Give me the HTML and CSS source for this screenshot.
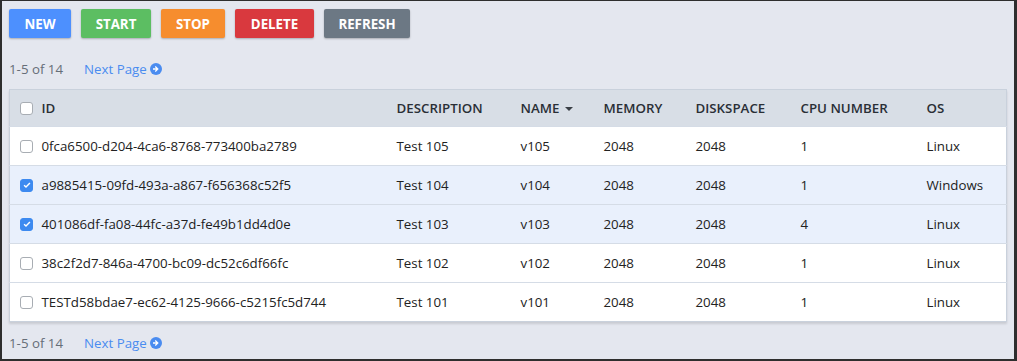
FILE: index.html
```html
<!DOCTYPE html>
<html lang="en">
<head>
  <meta charset="UTF-8">
  <title>Virtual Machines</title>
  <link rel="stylesheet" href="styles.css">
</head>
<body>
  <div class="frame">
    <div class="toolbar">
      <button class="btn btn-new">New</button>
      <button class="btn btn-start">Start</button>
      <button class="btn btn-stop">Stop</button>
      <button class="btn btn-delete">Delete</button>
      <button class="btn btn-refresh">Refresh</button>
    </div>

    <div class="pager">
      <span class="count">1-5 of 14</span>
      <a class="next" href="#">Next Page
        <svg class="next-icon" viewBox="0 0 16 16" width="12" height="12"><circle cx="8" cy="8" r="8" fill="#4a8cf0"/><path d="M4 7h4.2L6.4 5.2 7.6 4l4 4-4 4-1.2-1.2L8.2 9H4z" fill="#fff"/></svg>
      </a>
    </div>

    <table class="grid">
      <colgroup>
        <col class="c-check"><col class="c-id"><col class="c-desc"><col class="c-name">
        <col class="c-mem"><col class="c-disk"><col class="c-cpu"><col class="c-os">
      </colgroup>
      <thead>
        <tr>
          <th class="check-cell"><span class="box"></span></th>
          <th>ID</th>
          <th>Description</th>
          <th>Name <span class="caret"></span></th>
          <th>Memory</th>
          <th>Diskspace</th>
          <th>CPU Number</th>
          <th>OS</th>
        </tr>
      </thead>
      <tbody>
        <tr>
          <td class="check-cell"><span class="box"></span></td>
          <td>0fca6500-d204-4ca6-8768-773400ba2789</td><td>Test 105</td><td>v105</td><td>2048</td><td>2048</td><td>1</td><td>Linux</td>
        </tr>
        <tr class="selected">
          <td class="check-cell"><span class="box on"><svg viewBox="0 0 12 12" width="10" height="10"><path d="M2.5 6.2l2.3 2.3 4.7-4.8" fill="none" stroke="#fff" stroke-width="1.7"/></svg></span></td>
          <td>a9885415-09fd-493a-a867-f656368c52f5</td><td>Test 104</td><td>v104</td><td>2048</td><td>2048</td><td>1</td><td>Windows</td>
        </tr>
        <tr class="selected">
          <td class="check-cell"><span class="box on"><svg viewBox="0 0 12 12" width="10" height="10"><path d="M2.5 6.2l2.3 2.3 4.7-4.8" fill="none" stroke="#fff" stroke-width="1.7"/></svg></span></td>
          <td>401086df-fa08-44fc-a37d-fe49b1dd4d0e</td><td>Test 103</td><td>v103</td><td>2048</td><td>2048</td><td>4</td><td>Linux</td>
        </tr>
        <tr>
          <td class="check-cell"><span class="box"></span></td>
          <td>38c2f2d7-846a-4700-bc09-dc52c6df66fc</td><td>Test 102</td><td>v102</td><td>2048</td><td>2048</td><td>1</td><td>Linux</td>
        </tr>
        <tr>
          <td class="check-cell"><span class="box"></span></td>
          <td>TESTd58bdae7-ec62-4125-9666-c5215fc5d744</td><td>Test 101</td><td>v101</td><td>2048</td><td>2048</td><td>1</td><td>Linux</td>
        </tr>
      </tbody>
    </table>

    <div class="pager pager-bottom">
      <span class="count">1-5 of 14</span>
      <a class="next" href="#">Next Page
        <svg class="next-icon" viewBox="0 0 16 16" width="12" height="12"><circle cx="8" cy="8" r="8" fill="#4a8cf0"/><path d="M4 7h4.2L6.4 5.2 7.6 4l4 4-4 4-1.2-1.2L8.2 9H4z" fill="#fff"/></svg>
      </a>
    </div>
  </div>
</body>
</html>
```

FILE: styles.css
```css
* { margin:0; padding:0; box-sizing:border-box }
body {
  font-family:'Open Sans', 'Liberation Sans', sans-serif;
  font-size:13.3px; color:#222;
  background:#e4e7ef;
}
.frame {
  height:361px; overflow:hidden;
  border:2px solid #2e2e2e; border-top-width:1px; border-right-width:3px;
  padding:8px 8px 0 7px;
  background:#e4e7ef;
}

.toolbar { display:flex; gap:10px; }
.btn {
  height:29px; padding:0 10px; border:none; border-radius:2px;
  font-family:inherit; font-size:13.3px; font-weight:700; color:#fff;
  text-transform:uppercase; cursor:pointer;
  box-shadow:0 1px 2px rgba(0,0,0,0.25);
}
.btn-new { background:#4d90fe; width:62px; }
.btn-start { background:#5cbe62; width:70px; }
.btn-stop { background:#f68d2e; width:64px; }
.btn-delete { background:#d9393e; width:79px; }
.btn-refresh { background:#6c7884; width:86px; }

.pager {
  display:flex; align-items:center; gap:21px;
  height:20px; margin:21px 0 10px 0;
}
.pager-bottom { margin:11px 0 0 0; }
.count { color:#666e78; }
.next { color:#4a8cf0; text-decoration:none; display:flex; align-items:center; gap:3px; }
.next-icon { display:block; }

.grid {
  width:997px; table-layout:fixed; border-collapse:collapse;
  background:#fff; border:1px solid #c9d1dc;
  box-shadow:0 2px 2px rgba(0,0,0,0.12);
}
.c-check { width:32px; }
.c-id { width:355px; }
.c-desc { width:124px; }
.c-name { width:83px; }
.c-mem { width:92px; }
.c-disk { width:105px; }
.c-cpu { width:126px; }
.c-os { width:80px; }

.grid th {
  height:37px; background:#d8dee6; text-align:left;
  font-weight:600; text-transform:uppercase; color:#2a2f36;
  white-space:nowrap;
}
.grid td { height:39px; border-top:1px solid #d5dce6; white-space:nowrap; }
.grid tr.selected td { background:#e9f0fc; }
.check-cell { padding-left:10px; }

.box {
  display:flex; align-items:center; justify-content:center;
  width:13px; height:13px; border:1px solid #a8adb3; border-radius:3px;
  background:#fff;
}
.box.on { background:#3d8af0; border-color:#3d8af0; }
.box svg { display:block; }

.caret {
  display:inline-block; vertical-align:middle; margin-left:2px;
  border-left:4px solid transparent; border-right:4px solid transparent;
  border-top:4px solid #3a3f46;
}
```
